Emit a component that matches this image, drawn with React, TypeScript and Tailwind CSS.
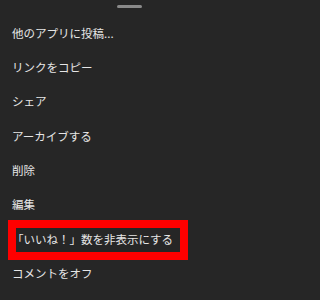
const items = [
  "他のアプリに投稿...",
  "リンクをコピー",
  "シェア",
  "アーカイブする",
  "削除",
  "編集",
  "「いいね！」数を非表示にする",
  "コメントをオフ",
];

export default function App() {
  return (
    <div className="w-full h-[300px] bg-[#262626] overflow-hidden">
      <div
        className="relative w-[258px] h-full bg-[#262626] text-[#e6e6e6]"
        style={{ fontFamily: '"Noto Sans CJK JP", "Noto Sans", sans-serif' }}
      >
        <div className="flex justify-center pt-[5px]">
          <div className="w-[25px] h-[3px] rounded-full bg-[#8a8a8a]" />
        </div>
        <ul className="mt-[8.5px]">
          {items.map((label) => (
            <li key={label} className="relative h-[34.3px] flex items-center px-[12px] text-[11.5px] leading-none">
              {label.startsWith("「") && (
                <div className="absolute left-[8px] top-[-2px] w-[180px] h-[40px] border-[8px] border-[#ff0000]" />
              )}
              <span>{label}</span>
            </li>
          ))}
        </ul>
      </div>
    </div>
  );
}
